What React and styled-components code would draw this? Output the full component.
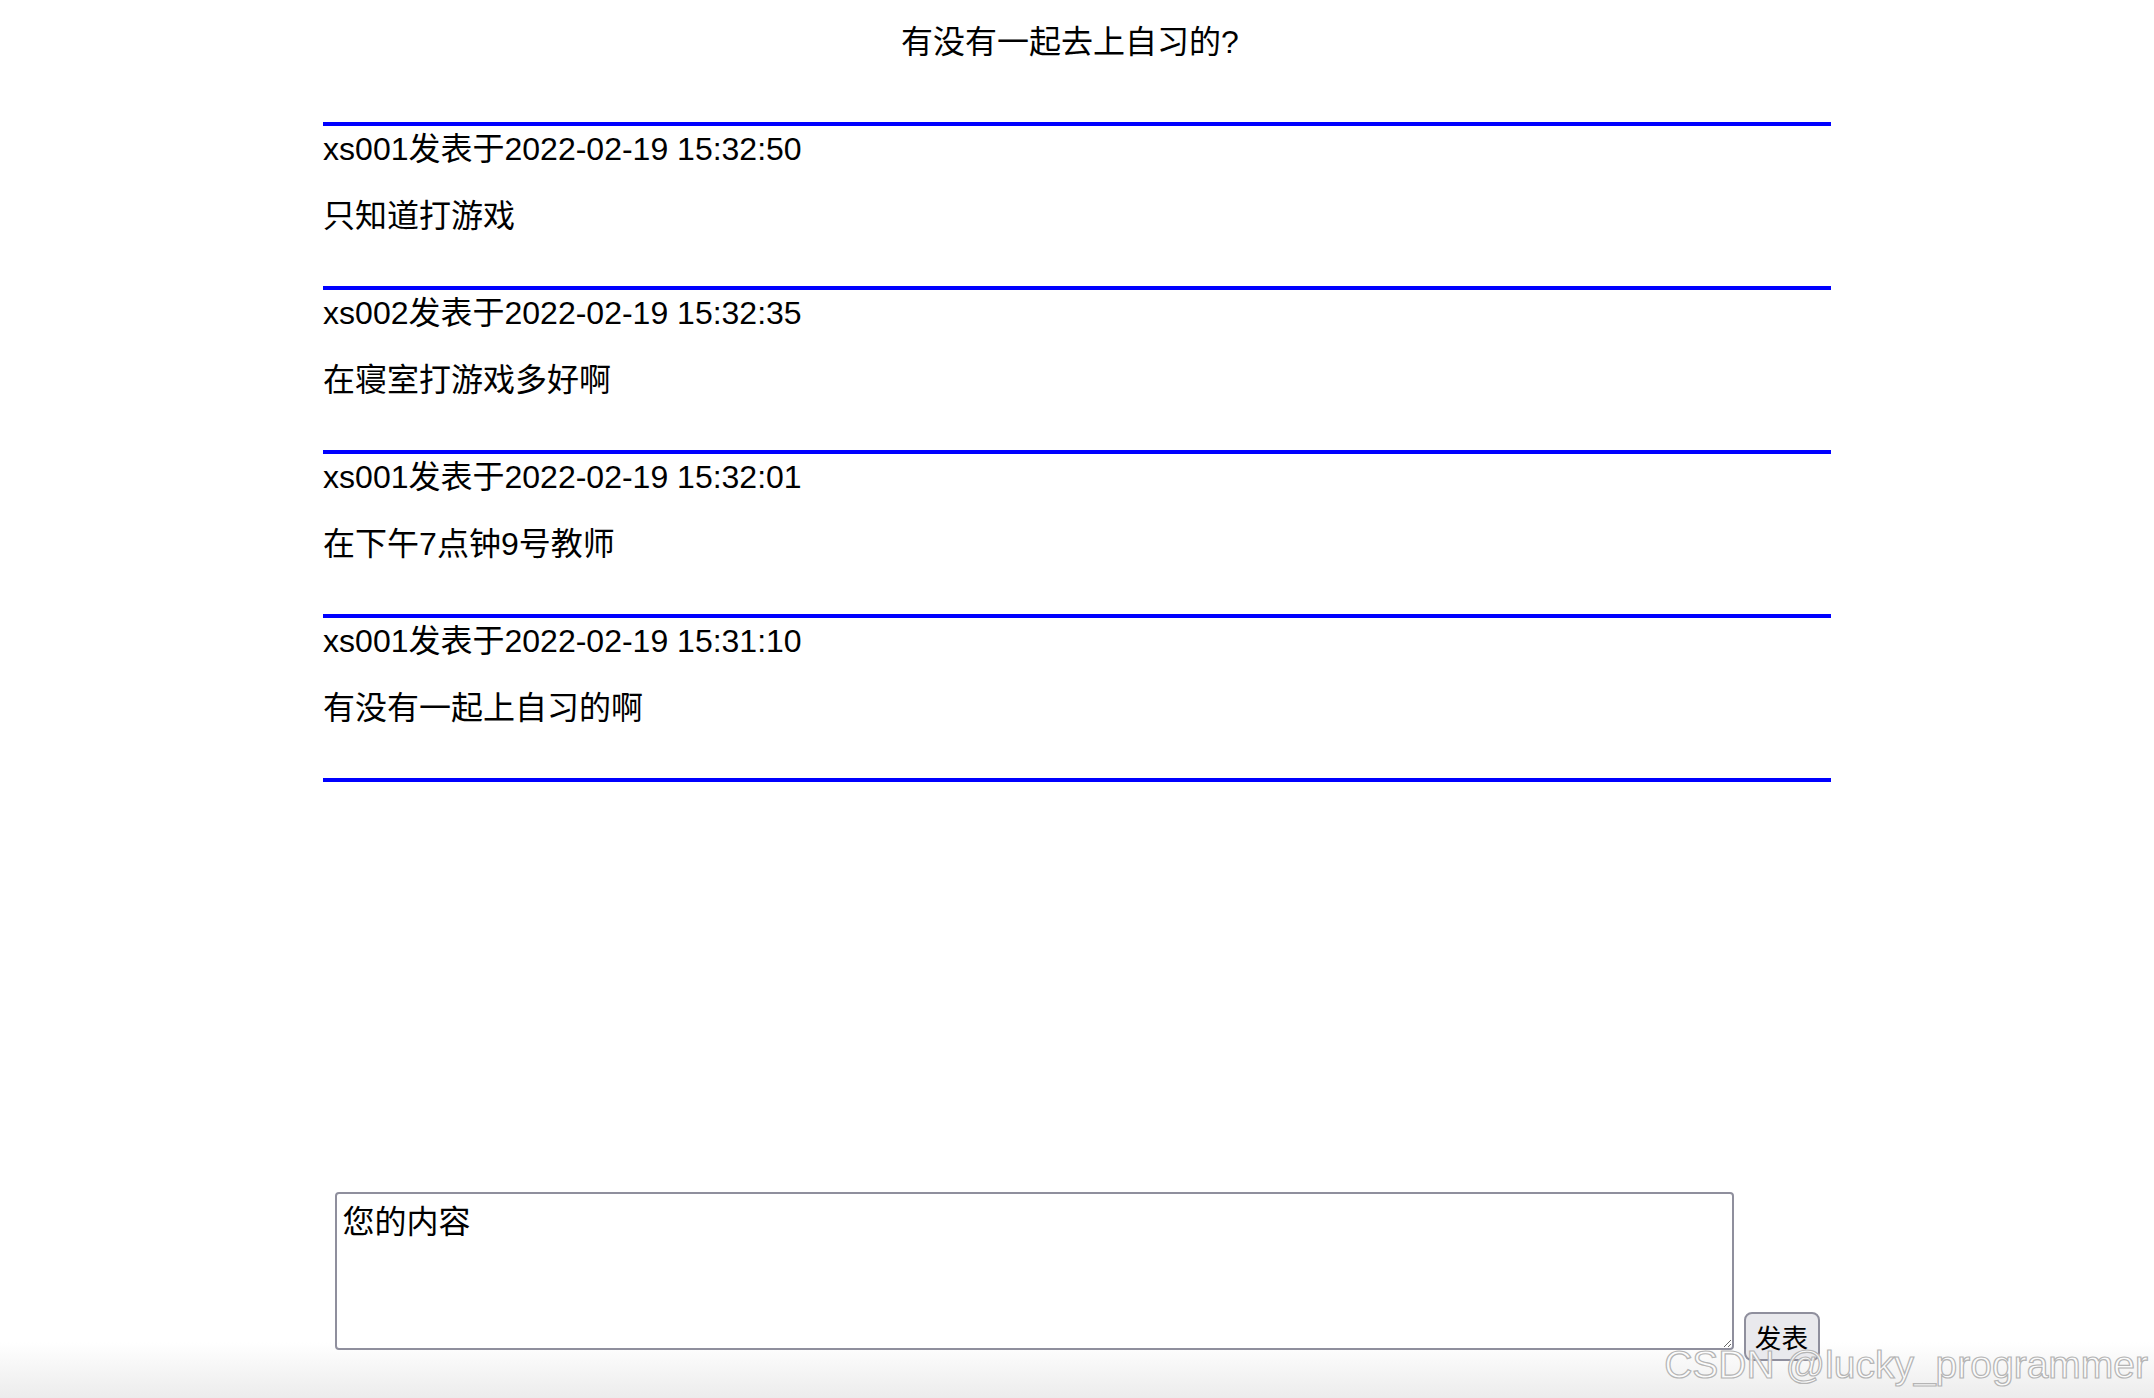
import React from 'react'
import styled, { createGlobalStyle } from 'styled-components';

const posts = [
    { user: 'xs001', time: '2022-02-19 15:32:50', text: '只知道打游戏' },
    { user: 'xs002', time: '2022-02-19 15:32:35', text: '在寝室打游戏多好啊' },
    { user: 'xs001', time: '2022-02-19 15:32:01', text: '在下午7点钟9号教师' },
    { user: 'xs001', time: '2022-02-19 15:31:10', text: '有没有一起上自习的啊' },
];

function App() {
    return (
        <>
            <GlobalStyle />
            <Page>
                <Title>有没有一起去上自习的?</Title>
                <PostList>
                    {posts.map((p, i) => (
                        <Post key={i}>
                            <PostHead>{p.user}发表于{p.time}</PostHead>
                            <PostBody>{p.text}</PostBody>
                        </Post>
                    ))}
                </PostList>
                <ReplyForm onSubmit={e => e.preventDefault()}>
                    <ReplyBox defaultValue="您的内容" />
                    <SendButton type="submit">发表</SendButton>
                </ReplyForm>
                <Watermark>CSDN @lucky_programmer</Watermark>
            </Page>
        </>
    )
}

const GlobalStyle = createGlobalStyle`
    html, body {
        margin: 0;
        padding: 0;
        background: #fff;
    }
    body {
        font-family: "Liberation Sans", "Noto Sans CJK SC", sans-serif;
        color: #000;
    }
`

const Page = styled.div`
    position: relative;
    min-height: 100vh;
    display: flex;
    flex-direction: column;
    overflow: hidden;
    background: linear-gradient(to bottom, #fff 0, #fff calc(100% - 56px), #ececec 100%);
`

const Title = styled.div`
    padding: 24px 14px 0 0;
    margin-bottom: 61px;
    text-align: center;
    font-size: 32px;
    line-height: 37px;
`

const PostList = styled.div`
    width: 70%;
    margin: 0 auto;
    border-bottom: 4px solid #0000ff;
`

const Post = styled.div`
    border-top: 4px solid #0000ff;
    padding: 5px 0 51px;
`

const PostHead = styled.div`
    font-size: 32px;
    line-height: 37px;
`

const PostBody = styled.p`
    margin: 30px 0 0;
    font-size: 32px;
    line-height: 37px;
`

const ReplyForm = styled.form`
    margin-top: auto;
    padding-bottom: 37px;
    display: flex;
    align-items: flex-end;
    justify-content: center;
    gap: 10px;
`

const ReplyBox = styled.textarea`
    box-sizing: border-box;
    width: 1399px;
    height: 158px;
    margin-bottom: 11px;
    padding: 8px 6px;
    border: 2px solid #8f8f9d;
    border-radius: 4px;
    background: #fff;
    font-family: "Liberation Sans", "Noto Sans CJK SC", sans-serif;
    font-size: 32px;
    line-height: 40px;
    color: #000;
    outline: none;
`

const SendButton = styled.button`
    box-sizing: border-box;
    width: 76px;
    height: 49px;
    padding: 0;
    border: 2px solid #8f8f9d;
    border-radius: 8px;
    background: #e9e9ed;
    font-family: "Liberation Sans", "Noto Sans CJK SC", sans-serif;
    font-size: 26.67px;
    color: #000;
    cursor: pointer;
`

const Watermark = styled.div`
    position: absolute;
    right: 6px;
    bottom: 11px;
    font-family: "Liberation Sans", sans-serif;
    font-size: 39px;
    line-height: 44px;
    color: rgba(252, 252, 252, 0.9);
    -webkit-text-stroke: 1.2px #b4b4b4;
    pointer-events: none;
`

export default App;
